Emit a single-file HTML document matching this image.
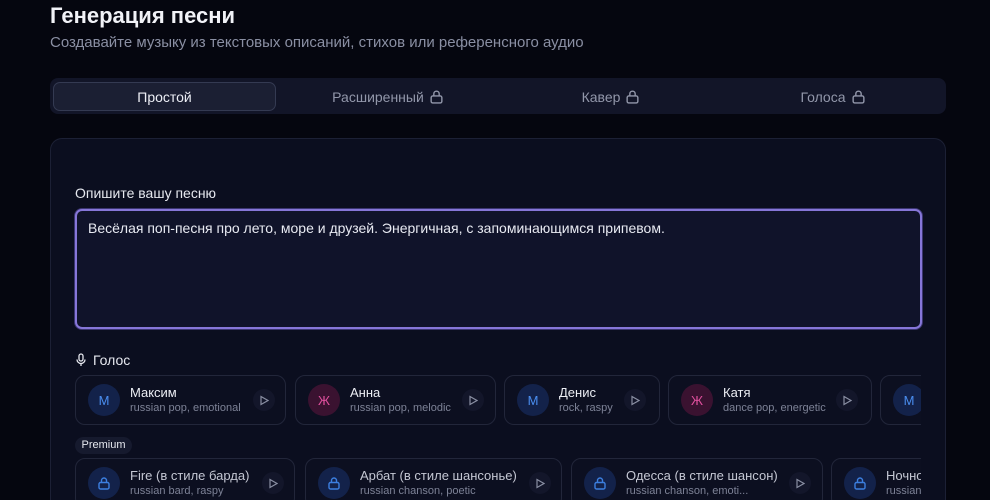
<!DOCTYPE html>
<html style="width:990px;height:500px;overflow:hidden"><head><meta charset="utf-8"><style>
*{box-sizing:border-box;margin:0;padding:0}
body{width:990px;height:500px;overflow:hidden;background:#05060f;font-family:"Liberation Sans",sans-serif;color:#e8eaf2;position:relative}
.abs{position:absolute}
h1{position:absolute;left:50px;top:3px;font-size:22px;font-weight:bold;color:#f1f2f7}
.sub{left:50px;top:34px;font-size:15px;color:#8a8fa3}
.tabs{left:50px;top:78px;width:896px;height:36px;background:#121528;border-radius:8px}
.tab{position:absolute;top:4px;height:29px;font-size:14px;color:#9297aa;display:flex;align-items:center;justify-content:center;gap:5px}
.tab.on{background:#1b1f33;border:1px solid #343a52;border-radius:7px;color:#eceef5}
.card{left:50px;top:138px;width:896px;height:362px;background:#0b0e1f;border:1px solid #1c2035;border-bottom:none;border-radius:12px 12px 0 0}
.lbl{font-size:14px;color:#e6e8ef}
.ta{left:75px;top:209px;width:847px;height:120px;background:#10132a;border:2px solid #8676d8;border-radius:7px;padding:9px 11px;font-size:14px;color:#e8eaf2;box-shadow:0 0 0 1px #3b3570}
.vc{position:absolute;height:50px;border:1px solid #22263a;border-radius:10px;background:#0c0f20;overflow:hidden}
.av{position:absolute;left:12px;top:8px;width:32px;height:32px;border-radius:50%;display:flex;align-items:center;justify-content:center;font-size:13px}
.m{background:#13224a;color:#4a8ef0}.f{background:#3a1230;color:#e0509e}
.n{position:absolute;left:54px;top:9px;font-size:13px;color:#eceef4;white-space:nowrap}
.s{position:absolute;left:54px;top:26px;font-size:11px;color:#7d8296;white-space:nowrap}
.pl{position:absolute;top:13px;width:22px;height:22px;border-radius:50%;background:#13162a;display:flex;align-items:center;justify-content:center}
.clip{left:75px;width:846px;overflow:hidden}
</style></head><body>
<h1>Генерация песни</h1>
<div class="abs sub">Создавайте музыку из текстовых описаний, стихов или референсного аудио</div>
<div class="abs tabs">
<div class="tab on" style="left:3px;width:223px">Простой</div>
<div class="tab" style="left:226px;width:224px">Расширенный <svg width="15" height="15" viewBox="0 0 14 14" fill="none" stroke="#9297aa" stroke-width="1.3"><rect x="2" y="6.5" width="10" height="6.5" rx="1.5"/><path d="M4.5 6.5V4.5a2.5 2.5 0 0 1 5 0v2"/></svg></div>
<div class="tab" style="left:450px;width:222px">Кавер <svg width="15" height="15" viewBox="0 0 14 14" fill="none" stroke="#9297aa" stroke-width="1.3"><rect x="2" y="6.5" width="10" height="6.5" rx="1.5"/><path d="M4.5 6.5V4.5a2.5 2.5 0 0 1 5 0v2"/></svg></div>
<div class="tab" style="left:672px;width:222px">Голоса <svg width="15" height="15" viewBox="0 0 14 14" fill="none" stroke="#9297aa" stroke-width="1.3"><rect x="2" y="6.5" width="10" height="6.5" rx="1.5"/><path d="M4.5 6.5V4.5a2.5 2.5 0 0 1 5 0v2"/></svg></div>
</div>
<div class="abs card"></div>
<div class="abs lbl" style="left:75px;top:185px">Опишите вашу песню</div>
<div class="abs ta">Весёлая поп-песня про лето, море и друзей. Энергичная, с запоминающимся припевом.</div>
<div class="abs lbl" style="left:75px;top:352px;display:flex;align-items:center;gap:6px"><svg width="12" height="14" viewBox="0 0 12 14" fill="none" stroke="#e6e8ef" stroke-width="1.3"><rect x="4" y="1" width="4" height="7" rx="2"/><path d="M2 6.5a4 4 0 0 0 8 0M6 10.5V13"/></svg>Голос</div>
<div class="abs clip" style="top:375px;height:51px">
<div class="vc" style="left:0;width:211px"><div class="av m">M</div><div class="n">Максим</div><div class="s">russian pop, emotional</div><div class="pl" style="left:177px"><svg width="10" height="11"><path d="M2 1.5l7 4-7 4z" fill="none" stroke="#8a8fa3" stroke-width="1.2"/></svg></div></div>
<div class="vc" style="left:220px;width:201px"><div class="av f">Ж</div><div class="n">Анна</div><div class="s">russian pop, melodic</div><div class="pl" style="left:166px"><svg width="10" height="11"><path d="M2 1.5l7 4-7 4z" fill="none" stroke="#8a8fa3" stroke-width="1.2"/></svg></div></div>
<div class="vc" style="left:429px;width:156px"><div class="av m">M</div><div class="n">Денис</div><div class="s">rock, raspy</div><div class="pl" style="left:119px"><svg width="10" height="11"><path d="M2 1.5l7 4-7 4z" fill="none" stroke="#8a8fa3" stroke-width="1.2"/></svg></div></div>
<div class="vc" style="left:593px;width:204px"><div class="av f">Ж</div><div class="n">Катя</div><div class="s">dance pop, energetic</div><div class="pl" style="left:167px"><svg width="10" height="11"><path d="M2 1.5l7 4-7 4z" fill="none" stroke="#8a8fa3" stroke-width="1.2"/></svg></div></div>
<div class="vc" style="left:805px;width:100px"><div class="av m">M</div></div>
</div>
<div class="abs" style="left:75px;top:437px;width:57px;height:17px;border-radius:9px;background:#161a2e;font-size:11px;color:#e6e8ef;text-align:center;line-height:17px">Premium</div>
<div class="abs clip" style="top:458px;height:42px">
<div class="vc" style="left:0;width:220px"><div class="av m"><svg width="14" height="14" viewBox="0 0 14 14" fill="none" stroke="#3c7fe0" stroke-width="1.4"><rect x="2" y="6.5" width="10" height="6.5" rx="1.5"/><path d="M4.5 6.5V4.5a2.5 2.5 0 0 1 5 0v2"/></svg></div><div class="n" style="color:#c4c7d3">Fire (в стиле барда)</div><div class="s">russian bard, raspy</div><div class="pl" style="left:186px"><svg width="10" height="11"><path d="M2 1.5l7 4-7 4z" fill="none" stroke="#8a8fa3" stroke-width="1.2"/></svg></div></div>
<div class="vc" style="left:230px;width:257px"><div class="av m"><svg width="14" height="14" viewBox="0 0 14 14" fill="none" stroke="#3c7fe0" stroke-width="1.4"><rect x="2" y="6.5" width="10" height="6.5" rx="1.5"/><path d="M4.5 6.5V4.5a2.5 2.5 0 0 1 5 0v2"/></svg></div><div class="n" style="color:#c4c7d3">Арбат (в стиле шансонье)</div><div class="s">russian chanson, poetic</div><div class="pl" style="left:223px"><svg width="10" height="11"><path d="M2 1.5l7 4-7 4z" fill="none" stroke="#8a8fa3" stroke-width="1.2"/></svg></div></div>
<div class="vc" style="left:496px;width:252px"><div class="av m"><svg width="14" height="14" viewBox="0 0 14 14" fill="none" stroke="#3c7fe0" stroke-width="1.4"><rect x="2" y="6.5" width="10" height="6.5" rx="1.5"/><path d="M4.5 6.5V4.5a2.5 2.5 0 0 1 5 0v2"/></svg></div><div class="n" style="color:#c4c7d3">Одесса (в стиле шансон)</div><div class="s">russian chanson, emoti...</div><div class="pl" style="left:217px"><svg width="10" height="11"><path d="M2 1.5l7 4-7 4z" fill="none" stroke="#8a8fa3" stroke-width="1.2"/></svg></div></div>
<div class="vc" style="left:756px;width:200px"><div class="av m"><svg width="14" height="14" viewBox="0 0 14 14" fill="none" stroke="#3c7fe0" stroke-width="1.4"><rect x="2" y="6.5" width="10" height="6.5" rx="1.5"/><path d="M4.5 6.5V4.5a2.5 2.5 0 0 1 5 0v2"/></svg></div><div class="n" style="color:#c4c7d3">Ночной</div><div class="s">russian</div></div>
</div>
</body></html>
